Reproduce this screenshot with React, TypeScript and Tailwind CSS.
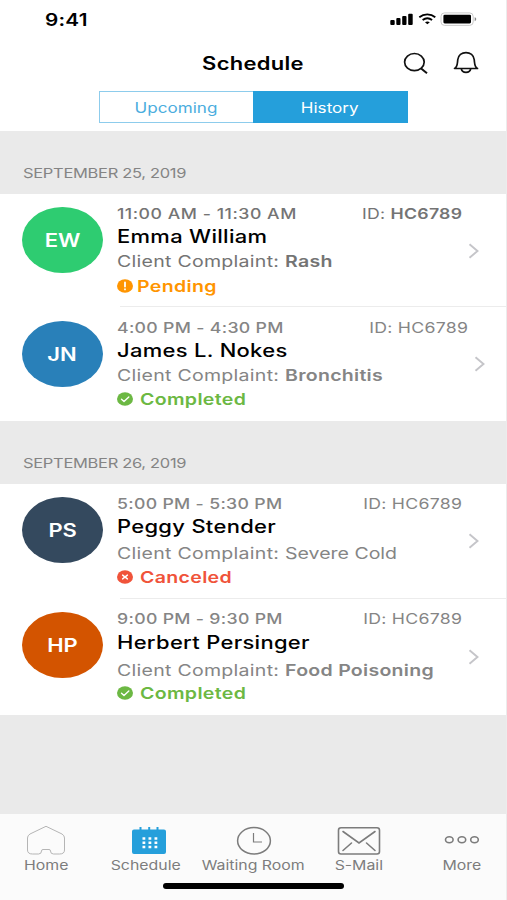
import type { ReactNode } from "react";

type Status = "pending" | "completed" | "canceled";

interface Appointment {
  initials: string;
  avatar: string;
  time: string;
  timeStyle: string;
  name: string;
  complaint: string;
  complaintStyle: string;
  idStyle: string;
  textColor: string;
  status: Status;
  row: string;
  lines: string;
  right: string;
  chevron: string;
}

const days: { date: string; items: Appointment[] }[] = [
  {
    date: "SEPTEMBER 25, 2019",
    items: [
      {
        initials: "EW",
        avatar: "bg-[#2ecc71]",
        time: "11:00 AM - 11:30 AM",
        timeStyle: "tracking-[0.43px]",
        name: "Emma William",
        complaint: "Rash",
        complaintStyle: "font-semibold",
        idStyle: "font-semibold",
        textColor: "text-[#747474]",
        status: "pending",
        row: "h-[113px] pt-[8px]",
        lines: "grid-rows-[24px_22px_26px_24px]",
        right: "pr-[27px]",
        chevron: "mt-[41px]",
      },
      {
        initials: "JN",
        avatar: "bg-[#2980b9]",
        time: "4:00 PM - 4:30 PM",
        timeStyle: "tracking-[0.26px]",
        name: "James L. Nokes",
        complaint: "Bronchitis",
        complaintStyle: "font-semibold",
        idStyle: "font-normal",
        textColor: "text-[#858585]",
        status: "completed",
        row: "h-[114px] pt-[9px]",
        lines: "grid-rows-[24px_22px_26px_22px]",
        right: "pr-[21px]",
        chevron: "mt-[40px]",
      },
    ],
  },
  {
    date: "SEPTEMBER 26, 2019",
    items: [
      {
        initials: "PS",
        avatar: "bg-[#34495e]",
        time: "5:00 PM - 5:30 PM",
        timeStyle: "tracking-[0.26px]",
        name: "Peggy Stender",
        complaint: "Severe Cold",
        complaintStyle: "font-normal tracking-normal",
        idStyle: "font-normal",
        textColor: "text-[#858585]",
        status: "canceled",
        row: "h-[115px] pt-[8px]",
        lines: "grid-rows-[24px_22px_30px_18px]",
        right: "pr-[27px]",
        chevron: "mt-[41px]",
      },
      {
        initials: "HP",
        avatar: "bg-[#d35400]",
        time: "9:00 PM - 9:30 PM",
        timeStyle: "tracking-[0.26px]",
        name: "Herbert Persinger",
        complaint: "Food Poisoning",
        complaintStyle: "font-semibold",
        idStyle: "font-normal",
        textColor: "text-[#858585]",
        status: "completed",
        row: "h-[116px] pt-[8px]",
        lines: "grid-rows-[24px_24px_30px_16px]",
        right: "pr-[27px]",
        chevron: "mt-[42px]",
      },
    ],
  },
];

const statuses = {
  pending: { label: "Pending", color: "text-[#ff9500]", gap: "gap-1" },
  completed: { label: "Completed", color: "text-[#6cb843]", gap: "gap-[7px]" },
  canceled: { label: "Canceled", color: "text-[#f0533a]", gap: "gap-[7px]" },
};

// Extended-width text
function Wide({ className = "", children }: { className?: string; children: ReactNode }) {
  return <span className={`inline-block whitespace-nowrap scale-x-[1.22] ${className}`}>{children}</span>;
}

function StatusIcon({ status }: { status: Status }) {
  return (
    <svg width="16" height="14" viewBox="0 0 16 14" className="shrink-0">
      <ellipse cx="8" cy="7" rx="8" ry="6.7" fill="currentColor" />
      <g stroke="#fff" fill="none" strokeLinecap="round" strokeLinejoin="round">
        {status === "pending" && <path d="M8 3.400v4.200M8 10.200v.2" strokeWidth="1.8" />}
        {status === "completed" && <path d="M4.500 7.300 7 9.500l4.800-4.500" strokeWidth="1.4" />}
        {status === "canceled" && <path d="m5.600 5.100 4.800 3.800M10.400 5.100 5.600 8.900" strokeWidth="1.4" />}
      </g>
    </svg>
  );
}

function StatusBar() {
  return (
    <div className="flex h-[39px] justify-between pl-[45px] pr-[29px]">
      <Wide className="origin-left text-[17px] leading-[41px] font-semibold tracking-[0.2px]">9:41</Wide>
      <svg width="87" height="16" viewBox="0 0 87 16" className="mt-[12px]">
        <rect x="0.3" y="8" width="4.4" height="5" rx="1" />
        <rect x="6.3" y="6" width="4.2" height="7" rx="1" />
        <rect x="12.2" y="4" width="4.3" height="9" rx="1" />
        <rect x="18.2" y="1.7" width="4.5" height="11.3" rx="1" />
        <path d="M29.300 5.200c4.600-3.700 11.400-3.700 16 0M32.600 8c2.800-2.100 6.700-2.100 9.500 0" fill="none" stroke="#000" strokeWidth="1.8" />
        <path d="m35 10.200c1.500-1 3.300-1 4.800 0l-2.400 2.100z" />
        <rect x="51" y="0.9" width="32.2" height="12.5" rx="3.5" fill="none" stroke="#c4c4c4" strokeWidth="0.9" />
        <rect x="53.4" y="2.8" width="27.6" height="8.6" rx="1.3" />
        <path d="M84.700 5.300c2 .6 2 3.300 0 3.900z" fill="#888" />
      </svg>
    </div>
  );
}

function Header() {
  return (
    <header className="h-[131px] bg-white">
      <StatusBar />
      <div className="grid h-[52px] grid-cols-[1fr_120px_1fr] pb-[5px]">
        <Wide className="col-start-2 text-center text-[18px] leading-[49px] font-semibold tracking-[0.25px]">Schedule</Wide>
        <div className="flex items-start justify-end gap-6 pt-[12px] pr-[27px]">
          <svg width="26" height="24" viewBox="0 0 26 24" fill="none" stroke="#111" strokeWidth="1.7">
            <ellipse cx="11.4" cy="11.1" rx="9.8" ry="8.6" />
            <path d="m17.800 17.200 6.200 5" strokeWidth="2" />
          </svg>
          <svg width="26" height="24" viewBox="0 0 26 24" fill="none" stroke="#111" strokeWidth="1.7" strokeLinejoin="round">
            <path d="M1.500 17.500h23c-3.200-1.500-2.700-4.500-3.300-9C20.600 4.300 17.300 1.600 13 1.600S5.400 4.300 4.800 8.500c-.6 4.500-.1 7.500-3.300 9z" />
            <path d="M8.300 17.700c.7 5 8.700 5 9.400 0" />
          </svg>
        </div>
      </div>
      <div className="mx-auto flex h-[31.5px] w-[309px] text-[14px] leading-[33px]">
        <div className="w-[154px] border border-r-0 border-[#8dccec] text-center leading-[31px] text-[#4badde]">
          <Wide>Upcoming</Wide>
        </div>
        <div className="flex-1 bg-[#259fdb] text-center text-white">
          <Wide>History</Wide>
        </div>
      </div>
    </header>
  );
}

function AppointmentRow({ item }: { item: Appointment }) {
  const status = statuses[item.status];
  return (
    <div className={`flex bg-white pl-[22px] ${item.row} ${item.right}`}>
      <div className={`mt-[4.5px] mr-[14px] flex h-[66.5px] w-[81px] shrink-0 items-center justify-center rounded-[50%] pt-px text-white ${item.avatar}`}>
        <Wide className="text-[18px] font-semibold">{item.initials}</Wide>
      </div>
      <div className={`grid flex-1 items-center content-start ${item.lines} ${item.textColor}`}>
        <div className="flex items-center justify-between pr-[17px] text-[14.5px] leading-none">
          <Wide className={`origin-left font-medium ${item.timeStyle}`}>{item.time}</Wide>
          <Wide className="origin-right tracking-[0.22px]">
            ID: <span className={item.idStyle}>HC6789</span>
          </Wide>
        </div>
        <Wide className="origin-left justify-self-start text-[18px] leading-none font-medium tracking-[0.25px] text-black">{item.name}</Wide>
        <Wide className="origin-left justify-self-start text-[16px] leading-none tracking-[0.23px]">
          Client Complaint: <span className={item.complaintStyle}>{item.complaint}</span>
        </Wide>
        <div className={`flex items-center text-[16px] leading-none font-semibold tracking-[0.28px] ${status.color} ${status.gap}`}>
          <StatusIcon status={item.status} />
          <Wide className="origin-left">{status.label}</Wide>
        </div>
      </div>
      <svg width="11" height="16" viewBox="0 0 11 16" fill="none" stroke="#c5c5c9" strokeWidth="1.9" className={`-ml-[11px] shrink-0 ${item.chevron}`}>
        <path d="m1.500 1.200 8 6.800-8 6.800" />
      </svg>
    </div>
  );
}

const tabs = [
  {
    label: "Home",
    width: "w-[92px]",
    icon: (
      <svg width="40" height="30" viewBox="0 0 40 30" fill="none" stroke="#b5b5b5" strokeWidth="1">
        <path d="M20 1.300 36 9q2.500 1.500 2.500 4v12q0 4-5 4h-6q-3 0-3-3 0-1.500-1.500-1.500h-6q-1.500 0-1.500 1.500 0 3-3 3H6.500q-5 0-5-4V13q0-2.500 2.500-4z" />
      </svg>
    ),
  },
  {
    label: "Schedule",
    width: "w-[108px]",
    icon: (
      <svg width="40" height="30" viewBox="0 0 40 30" className="ml-[6px]">
        <path d="M5 4.500h30q2 0 2 2V27q0 2-2 2H5q-2 0-2-2V6.500q0-2 2-2zM10.500 2h2v4h-2zM19.200 2h2v4h-2zM27.500 2h2v4h-2z" fill="#259fdb" />
        <path d="M13.500 13.500h15.500M13.500 17.800h15.500M13.500 22h15.500" stroke="#fff" strokeWidth="2.400" strokeDasharray="2.800 3.200" />
      </svg>
    ),
  },
  {
    label: "Waiting Room",
    width: "w-[107px]",
    icon: (
      <svg width="40" height="30" viewBox="0 0 40 30" fill="none" stroke="#7c7c7c" strokeWidth="1.500">
        <ellipse cx="20" cy="15.800" rx="16.400" ry="13.200" />
        <path d="M19.500 8v9H28" strokeWidth="1.200" />
      </svg>
    ),
  },
  {
    label: "S-Mail",
    width: "w-[104px]",
    icon: (
      <svg width="44" height="30" viewBox="0 0 44 30" fill="none" stroke="#7c7c7c" strokeWidth="1.600" strokeLinecap="round">
        <rect x="1.500" y="2.800" width="41" height="26.200" rx="2.500" />
        <path d="m6 6.500 16 11.500L38 6.500M6 25.500l8.500-7.500M29.500 18l8.500 7.500" />
      </svg>
    ),
  },
  {
    label: "More",
    width: "w-[96px] pl-[6px]",
    icon: (
      <svg width="40" height="30" viewBox="0 0 40 30" fill="none" stroke="#7c7c7c" strokeWidth="1.600">
        <ellipse cx="7.300" cy="14.700" rx="3.800" ry="3" />
        <ellipse cx="19.900" cy="14.700" rx="3.800" ry="3" />
        <ellipse cx="32.500" cy="14.700" rx="3.800" ry="3" />
      </svg>
    ),
  },
];

function TabBar() {
  return (
    <nav className="h-[86px] bg-[#fbfbfb]">
      <div className="flex h-[68.5px] pt-[11px]">
        {tabs.map((tab) => (
          <div key={tab.label} className={`flex shrink-0 flex-col items-center ${tab.width}`}>
            {tab.icon}
            <Wide className="mt-[2px] text-[13px] leading-4 text-[#7d7d7d]">{tab.label}</Wide>
          </div>
        ))}
      </div>
      <div className="mx-auto h-[6px] w-[181px] rounded-full bg-black" />
    </nav>
  );
}

export default function App() {
  return (
    <div className="flex h-[900px] w-[507px] flex-col overflow-hidden border-r border-[#ececec] bg-[#eaeaea] font-['Inter',sans-serif]">
      <Header />
      <main className="flex-1">
        {days.map((day) => (
          <section key={day.date}>
            <h2 className="h-[63px] pt-[31px] pl-[22.5px] text-[13.5px] leading-[22px] tracking-[-0.25px] text-[#848484]">
              <Wide className="origin-left">{day.date}</Wide>
            </h2>
            {day.items.map((item, i) => (
              <div key={item.name}>
                {i > 0 && <div className="-mt-px ml-[120px] h-px bg-[#ececec]" />}
                <AppointmentRow item={item} />
              </div>
            ))}
          </section>
        ))}
      </main>
      <TabBar />
    </div>
  );
}
